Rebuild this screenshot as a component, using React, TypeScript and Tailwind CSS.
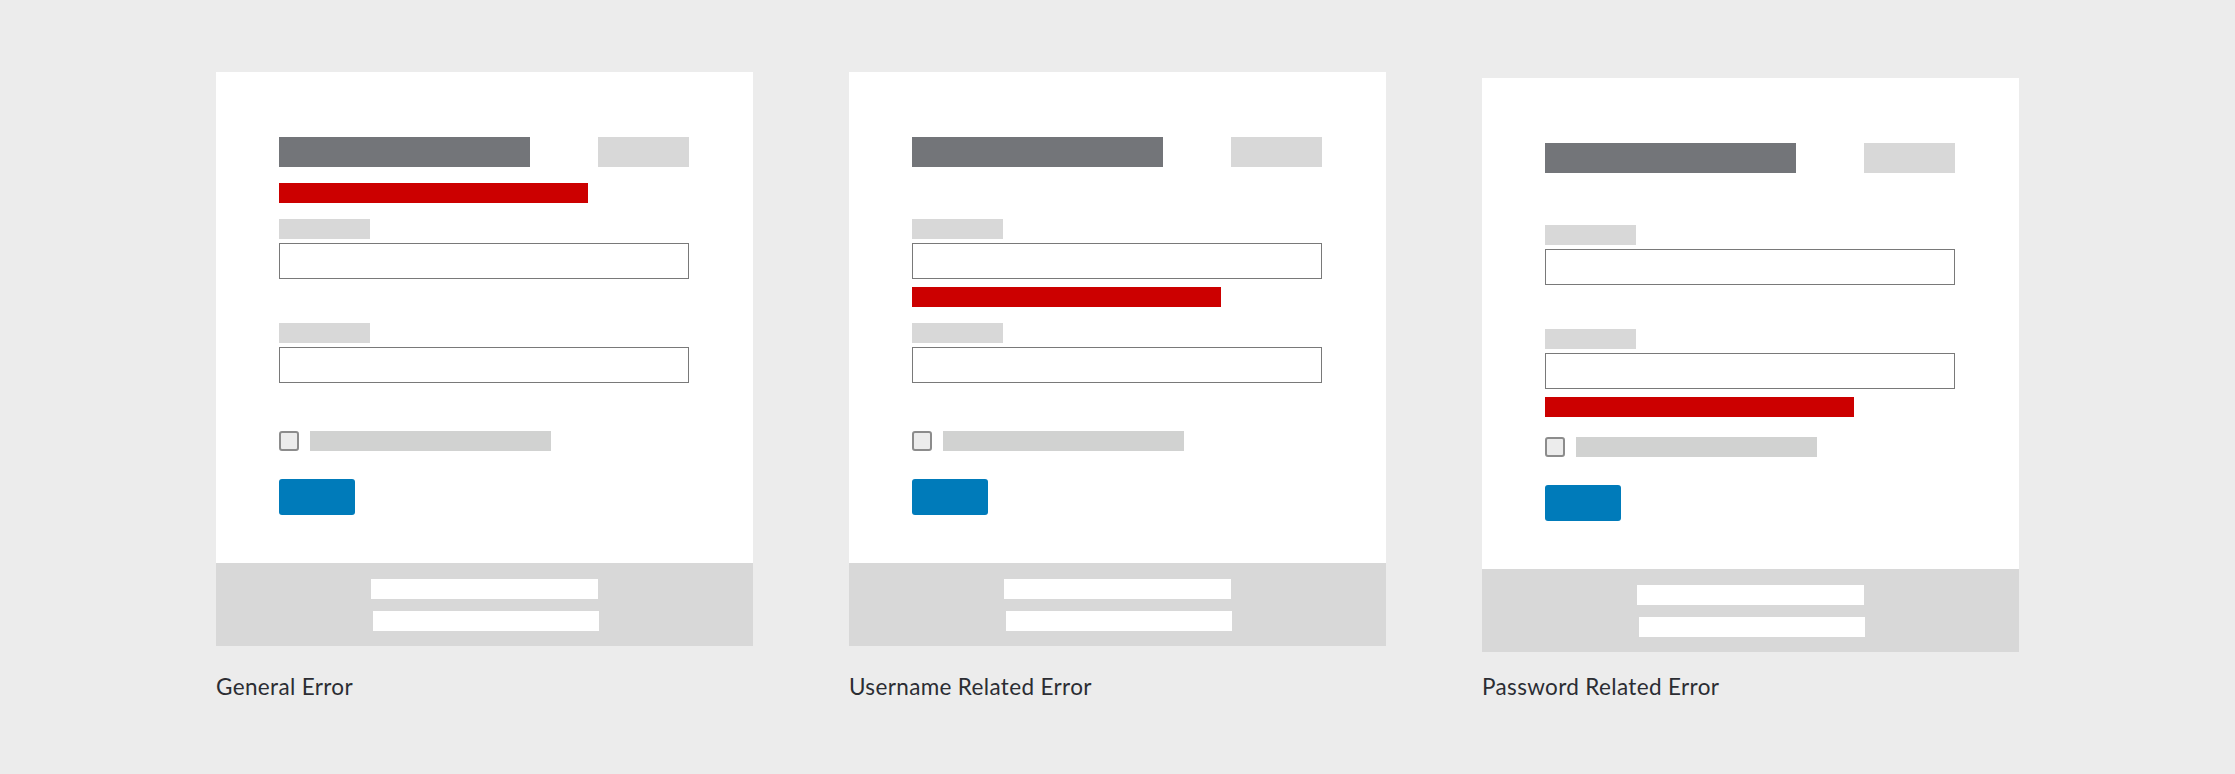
type ErrorKind = 'general' | 'username' | 'password';

const examples: { kind: ErrorKind; title: string; offset: string }[] = [
  { kind: 'general', title: 'General Error', offset: '' },
  { kind: 'username', title: 'Username Related Error', offset: '' },
  { kind: 'password', title: 'Password Related Error', offset: 'mt-[6px]' },
];

function ErrorSlot({ show, className }: { show: boolean; className: string }) {
  return <div className={`h-[20px] ${className}`}>{show && <div className="h-full w-[309px] bg-[#cc0000]" />}</div>;
}

function Field() {
  return (
    <>
      <div className="h-[20px] w-[91px] bg-[#d8d8d8]" />
      <div className="mt-[4px] h-[36px] w-full border border-[#797979] bg-white" />
    </>
  );
}

function LoginCard({ kind }: { kind: ErrorKind }) {
  return (
    <div className="w-[537px] bg-white">
      <div className="flex flex-col pt-[65px] pb-[48px] pl-[63px] pr-[64px]">
        <div className="flex h-[30px] justify-between">
          <div className="w-[251px] bg-[#737579]" />
          <div className="w-[91px] bg-[#d8d8d8]" />
        </div>
        <ErrorSlot show={kind === 'general'} className="mt-[16px]" />
        <div className="mt-[16px]">
          <Field />
        </div>
        <ErrorSlot show={kind === 'username'} className="mt-[8px]" />
        <div className="mt-[16px]">
          <Field />
        </div>
        <ErrorSlot show={kind === 'password'} className="mt-[8px]" />
        <div className="mt-[20px] flex h-[20px] items-center gap-[11px]">
          <div className="h-[20px] w-[20px] rounded-[3px] border-2 border-[#8c8c8c] bg-[#ececec]" />
          <div className="h-[20px] w-[241px] bg-[#d1d2d1]" />
        </div>
        <div className="mt-[28px] h-[36px] w-[76px] rounded-[3px] bg-[#007bba]" />
      </div>
      <div className="flex h-[83px] flex-col items-center bg-[#d8d8d8] pt-[16px]">
        <div className="h-[20px] w-[227px] bg-white" />
        <div className="mt-[12px] ml-[2px] h-[20px] w-[226px] bg-white" />
      </div>
    </div>
  );
}

export default function App() {
  return (
    <div className="h-[774px] w-full bg-[#ececec] pt-[72px] pl-[216px]">
      <div className="grid grid-cols-[537px_537px_537px] gap-x-[96px]">
        {examples.map((ex) => (
          <div key={ex.kind} className={ex.offset}>
            <LoginCard kind={ex.kind} />
          </div>
        ))}
        {examples.map((ex) => (
          <p
            key={ex.title}
            className="mt-[22px] font-['Lato',sans-serif] text-[22.5px] leading-[26px] tracking-[0.35px] text-[#2b2d33]"
          >
            {ex.title}
          </p>
        ))}
      </div>
    </div>
  );
}
